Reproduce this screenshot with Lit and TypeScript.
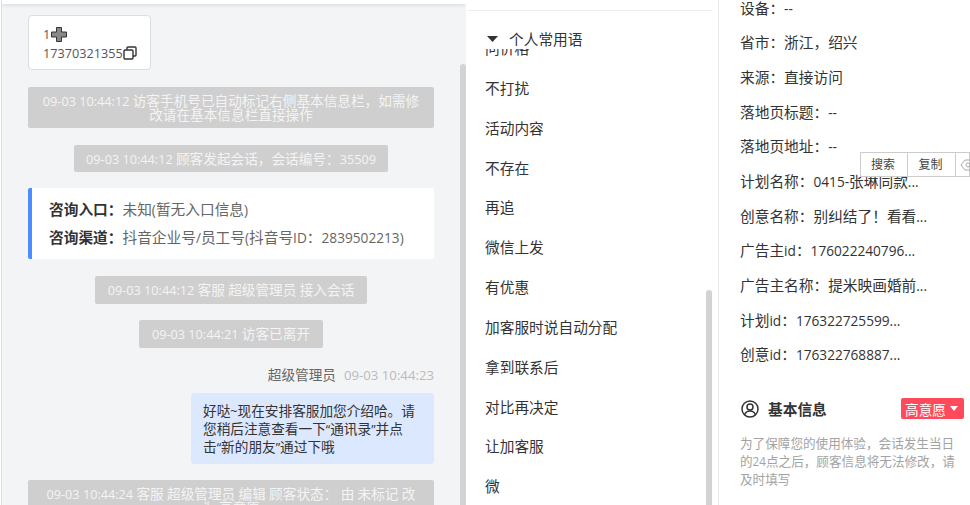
import { LitElement, html, css } from "lit";
import { customElement } from "lit/decorators.js";

const phrases = ["问价格","不打扰","活动内容","不存在","再追","微信上发","有优惠","加客服时说自动分配","拿到联系后","对比再决定","让加客服","微"];
const rows = ["设备：--","省市：浙江，绍兴","来源：直接访问","落地页标题：--","落地页地址：--","计划名称：0415-张琳同款...","创意名称：别纠结了！看看...","广告主id：176022240796...","广告主名称：提米映画婚前...","计划id：176322725599...","创意id：176322768887..."];

/* Latin runs sit at a smaller size than the CJK text around them, as in the reference's font. */
const t = (s: string) =>
  s.split(/([\x20-\x7e\u201c\u201d]+)/).map((part, i) => (i % 2 ? html`<span class="l">${part}</span>` : part));

@customElement("app-root")
export class AppRoot extends LitElement {
  static styles = css`
    :host { display: block; width: 970px; height: 505px; overflow: hidden; font-family: "Open Sans", "Noto Sans CJK SC", sans-serif; font-size: 14.7px; color: #333; background: #fff; }
    .l { font-size: 0.93em; line-height: 0; }
    .page { display: flex; height: 505px; }
    .chat { position: relative; width: 465px; margin-left: 1px; flex: none; box-sizing: border-box; border-left: 1px solid #ddd; background: #f3f4f6; overflow: hidden; font-size: 13.65px; }
    .topbar { height: 4px; background: #fff; box-shadow: 0 1px 4px rgba(0,0,0,.12); }
    .log { display: flex; flex-direction: column; align-items: center; padding: 11px 32px 0 26px; }
    .card { align-self: flex-start; box-sizing: border-box; width: 123px; height: 55px; padding: 9px 14px; background: #fff; border: 1px solid #ddd; border-radius: 4px; line-height: 18.5px; color: #555; margin-bottom: 17px; white-space: nowrap; }
    .card svg { vertical-align: -2px; }
    .card .plus { vertical-align: -3px; margin-left: 1px; }
    .sys { box-sizing: border-box; background: #cfcfcf; color: #f4f4f4; border-radius: 2px; text-align: center; padding: 7px 12.5px; line-height: 13.5px; margin-bottom: 16.5px; }
    .sys.wide { align-self: stretch; padding: 7px 14px; }
    .info { align-self: stretch; box-sizing: border-box; height: 71px; background: #fff; border-left: 4px solid #4d8cff; border-radius: 2px; padding: 7px 17px; line-height: 28px; font-size: 14.7px; color: #666; margin: -0.5px 0 17px; white-space: nowrap; }
    .info b { color: #333; font-weight: 700; }
    .who { align-self: flex-end; line-height: 18px; color: #666; margin: 2px 0 9px; }
    .who span.time { color: #bbb; margin-left: 8px; font-size: 14.2px; }
    .bubble { align-self: flex-end; box-sizing: border-box; width: 243px; height: 71px; padding: 9px 12px; background: #dce8fd; border-radius: 4px; line-height: 18px; color: #333; margin-bottom: 16px; }
    .bar { position: absolute; width: 6px; background: #d3d3d3; border-radius: 3px 3px 0 0; }
    .chat .bar { right: 0; top: 64px; bottom: 0; }
    .phr { position: relative; width: 253px; flex: none; box-sizing: border-box; padding: 0 6px 0 1px; border-right: 1px solid #e8e8e8; overflow: hidden; }
    .phr-top { height: 10px; border-bottom: 1px solid #eee; }
    .phr-head { height: 20px; display: flex; align-items: center; gap: 11px; padding: 18px 0 0 20px; line-height: 20px; }
    .phr-list { height: 456px; overflow: hidden; padding-left: 18px; }
    .phr-list div { height: 39.85px; line-height: 40px; }
    .phr-list .cut { margin-top: -21px; }
    .phr .bar { right: 6px; top: 290px; bottom: 0; }
    .side { flex: 1; min-width: 0; padding-left: 21px; }
    .row { height: 34.7px; line-height: 34.7px; white-space: nowrap; }
    .rows { margin-top: -9.5px; }
    .menu { position: absolute; left: 860px; top: 152px; width: 110px; height: 25px; box-sizing: border-box; display: flex; background: #fff; border: 1px solid #ccc; font-size: 12px; color: #444; }
    .menu span { width: 47px; flex: none; box-sizing: border-box; border-right: 1px solid #ccc; padding-right: 2px; text-align: center; line-height: 23px; }
    .menu span + span { width: 48px; }
    .menu svg { flex: none; margin: 5px 0 0 4px; }
    .basic { display: flex; align-items: center; margin-top: 25.5px; height: 22px; }
    .basic svg { margin-left: 1px; }
    .basic b { margin-left: 9px; font-weight: 700; }
    .tag { margin-left: auto; margin-right: 6px; width: 63px; height: 21px; box-sizing: border-box; display: flex; align-items: center; gap: 4px; padding-left: 4px; background: #ff4a5c; color: #fff; border-radius: 2px; font-size: 13.65px; }
    .tag i { width: 0; height: 0; border: 4px solid transparent; border-top: 5px solid #fff; border-bottom: 0; }
    .tip { width: 220px; margin-top: 15px; font-size: 12.6px; line-height: 18px; color: #a3a3a3; }
  `;

  render() {
    return html`<div class="page">
      <section class="chat">
        <div class="topbar"></div>
        <div class="log">
          <div class="card">${t("1")}<svg class="plus" width="16" height="15" viewBox="0 0 16 15"><path d="M5.500.5h5v4.500h5v5h-5v4.500h-5V10h-5V5h5z" fill="#888" stroke="#333" stroke-width="1"/></svg><br>${t("17370321355")}<svg width="14" height="14" viewBox="0 0 14 14" fill="#fff" stroke="#333" stroke-width="1.4"><rect x="4" y="1" width="9" height="9" rx="1"/><rect x="1" y="4" width="9" height="9" rx="1"/></svg></div>
          <div class="sys wide">${t("09-03 10:44:12 访客手机号已自动标记右侧基本信息栏，如需修改请在基本信息栏直接操作")}</div>
          <div class="sys">${t("09-03 10:44:12 顾客发起会话，会话编号：35509")}</div>
          <div class="info"><b>咨询入口：</b>${t("未知(暂无入口信息)")}<br><b>咨询渠道：</b>${t("抖音企业号/员工号(抖音号ID：2839502213)")}</div>
          <div class="sys">${t("09-03 10:44:12 客服 超级管理员 接入会话")}</div>
          <div class="sys">${t("09-03 10:44:21 访客已离开")}</div>
          <div class="who">超级管理员<span class="time">${t("09-03 10:44:23")}</span></div>
          <div class="bubble">${t("好哒~现在安排客服加您介绍哈。请您稍后注意查看一下“通讯录”并点击“新的朋友”通过下哦")}</div>
          <div class="sys wide">${t("09-03 10:44:24 客服 超级管理员 编辑 顾客状态： 由 未标记 改为 高意愿")}</div>
        </div>
        <div class="bar"></div>
      </section>
      <section class="phr">
        <div class="phr-top"></div>
        <div class="phr-head"><svg width="11" height="6" viewBox="0 0 11 6"><path d="M0 0h11L5.500 6z" fill="#333"/></svg>个人常用语</div>
        <div class="phr-list">${phrases.map((p, i) => html`<div class=${i === 0 ? "cut" : ""}>${p}</div>`)}</div>
        <div class="bar"></div>
      </section>
      <section class="side">
        <div class="rows">${rows.map((r) => html`<div class="row">${t(r)}</div>`)}</div>
        <div class="basic"><svg width="18" height="18" viewBox="0 0 18 18" fill="none" stroke="#333" stroke-width="1.5"><circle cx="9" cy="9" r="8"/><circle cx="9" cy="7" r="3"/><path d="M3.500 15c1-3 3-4 5.500-4s4.500 1 5.500 4"/></svg><b>基本信息</b><span class="tag">高意愿<i></i></span></div>
        <div class="tip">${t("为了保障您的使用体验，会话发生当日的24点之后，顾客信息将无法修改，请及时填写")}</div>
      </section>
      <div class="menu"><span>搜索</span><span>复制</span><svg width="16" height="14" viewBox="0 0 16 14" fill="none" stroke="#aaa"><path d="M5 2h10v10H5L1 7z"/><circle cx="8" cy="7" r="2"/></svg></div>
    </div>`;
  }
}
